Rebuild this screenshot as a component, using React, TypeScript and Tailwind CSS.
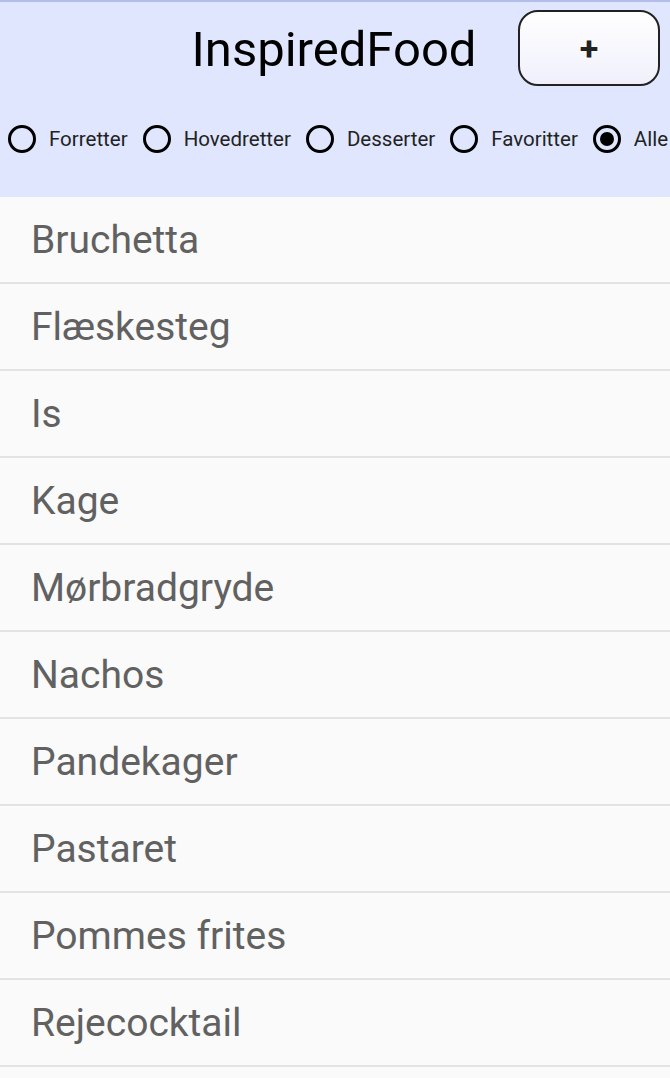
const filters = ['Forretter', 'Hovedretter', 'Desserter', 'Favoritter', 'Alle'];

const recipes = [
  'Bruchetta',
  'Flæskesteg',
  'Is',
  'Kage',
  'Mørbradgryde',
  'Nachos',
  'Pandekager',
  'Pastaret',
  'Pommes frites',
  'Rejecocktail',
];

function Radio({ label, checked }: { label: string; checked?: boolean }) {
  return (
    <div className="flex items-center gap-[13px]">
      <span className="w-[28px] h-[28px] rounded-full border-[3px] border-black flex items-center justify-center">
        {checked && <span className="w-[14px] h-[14px] rounded-full bg-black" />}
      </span>
      <span className="text-[20.5px] text-[#222] leading-none">{label}</span>
    </div>
  );
}

export default function App() {
  return (
    <div className="w-[670px] h-[1078px] overflow-hidden bg-[#fafafa] font-['Roboto',sans-serif]">
      <div className="h-[197px] bg-[#e0e6fd] border-t-2 border-[#b3bdea]">
        <div className="flex items-center pt-[8px]">
          <h1 className="flex-1 text-center pl-[150px] pt-[2px] text-[49px] text-black leading-none">InspiredFood</h1>
          <button className="mr-[10px] w-[142px] h-[76px] rounded-[20px] border-2 border-[#222] bg-gradient-to-b from-white to-[#f0f0fc] text-[34px] font-bold text-[#222] leading-none">
            +
          </button>
        </div>
        <div className="flex items-center gap-[15px] pl-[8px] mt-[39px]">
          {filters.map((f) => (
            <Radio key={f} label={f} checked={f === 'Alle'} />
          ))}
        </div>
      </div>
      <ul>
        {recipes.map((r) => (
          <li key={r} className="h-[87px] border-b-2 border-[#e3e3e3] flex items-center pl-[31px] pt-[2px] text-[39px] text-[#616161]">
            {r}
          </li>
        ))}
      </ul>
    </div>
  );
}
